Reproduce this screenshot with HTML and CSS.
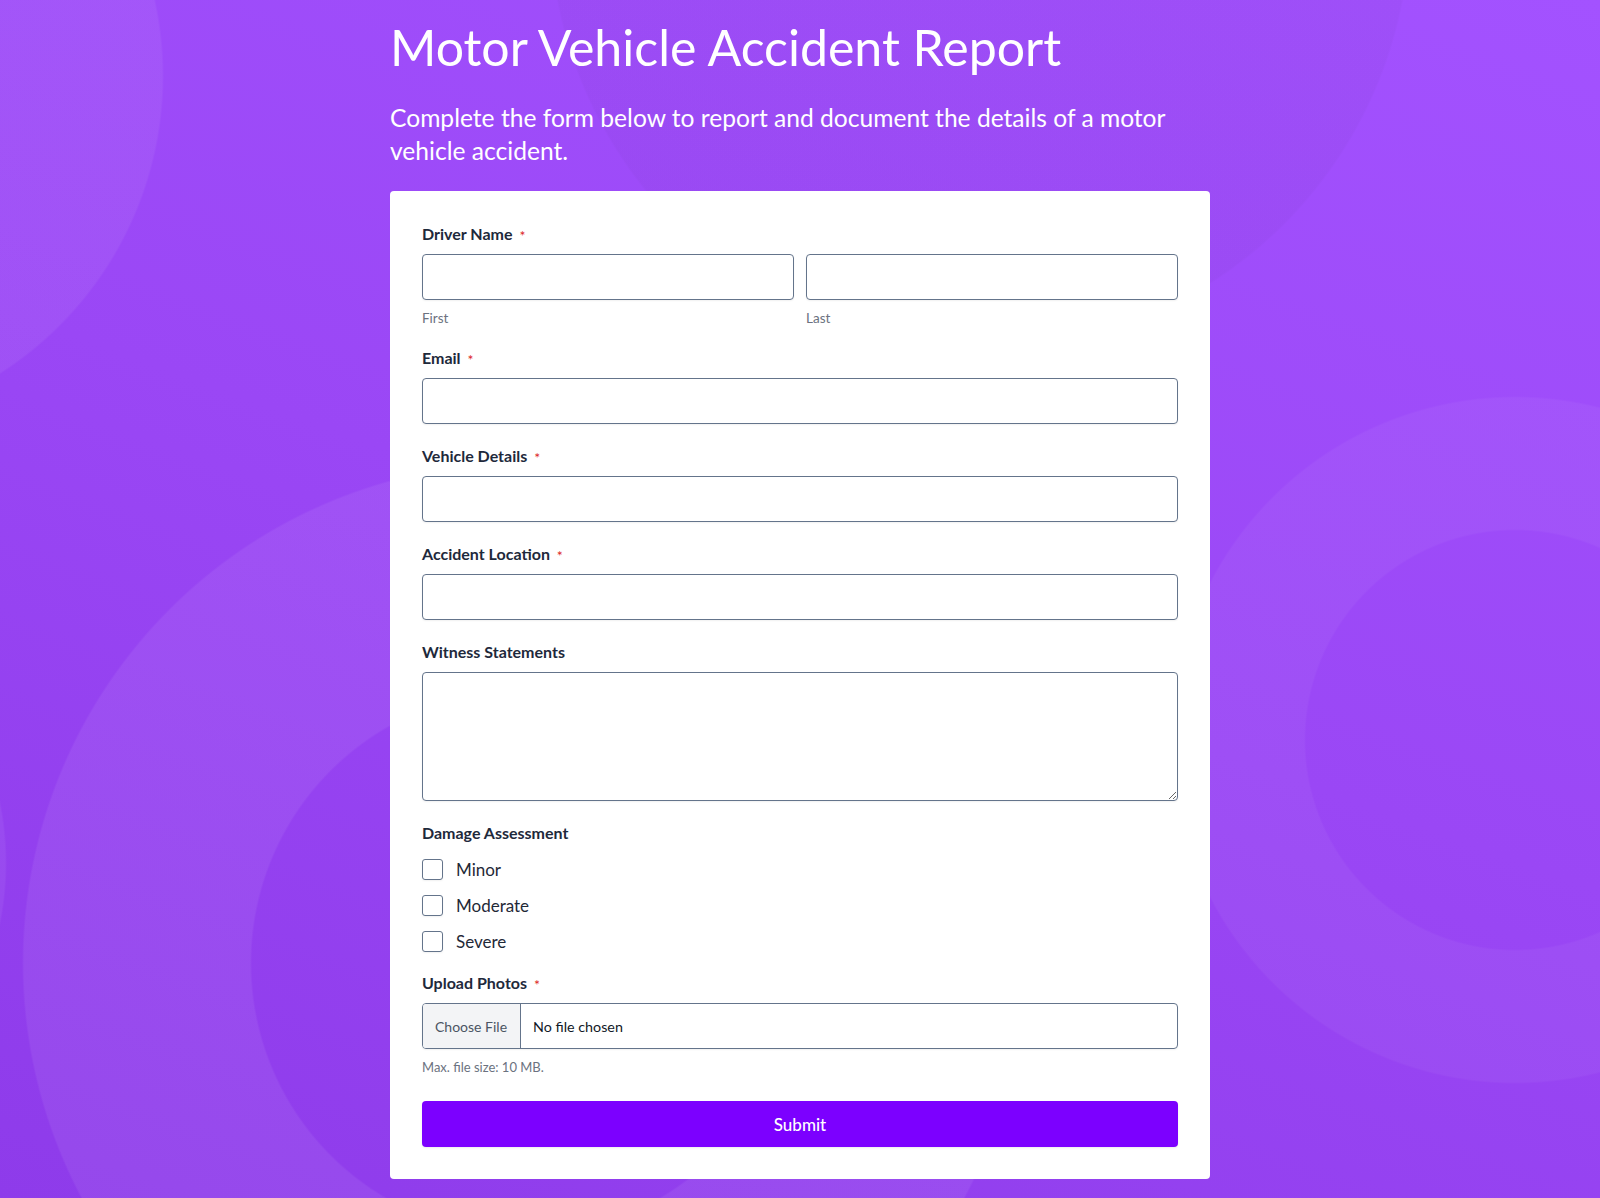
FILE: index.html
```html
<!DOCTYPE html>
<html lang="en">
<head>
<meta charset="utf-8">
<title>Motor Vehicle Accident Report</title>
<link rel="stylesheet" href="styles.css">
</head>
<body>
<div class="page">
  <main class="wrap">
    <h1 class="title">Motor Vehicle Accident Report</h1>
    <p class="intro">Complete the form below to report and document the details of a motor vehicle accident.</p>
    <form class="card">
      <div class="field">
        <div class="label">Driver Name <span class="req">*</span></div>
        <div class="name-row">
          <div class="name-col">
            <input class="input" type="text">
            <span class="sublabel">First</span>
          </div>
          <div class="name-col">
            <input class="input" type="text">
            <span class="sublabel">Last</span>
          </div>
        </div>
      </div>
      <div class="field">
        <div class="label">Email <span class="req">*</span></div>
        <input class="input" type="email">
      </div>
      <div class="field">
        <div class="label">Vehicle Details <span class="req">*</span></div>
        <input class="input" type="text">
      </div>
      <div class="field">
        <div class="label">Accident Location <span class="req">*</span></div>
        <input class="input" type="text">
      </div>
      <div class="field">
        <div class="label">Witness Statements</div>
        <textarea class="textarea"></textarea>
      </div>
      <div class="field field-checks">
        <div class="label">Damage Assessment</div>
        <div class="checks">
          <label class="check"><input type="checkbox" class="box"><span>Minor</span></label>
          <label class="check"><input type="checkbox" class="box"><span>Moderate</span></label>
          <label class="check"><input type="checkbox" class="box"><span>Severe</span></label>
        </div>
      </div>
      <div class="field field-upload">
        <div class="label">Upload Photos <span class="req">*</span></div>
        <label class="file">
          <input type="file" class="file-native">
          <span class="file-btn">Choose File</span>
          <span class="file-name">No file chosen</span>
        </label>
        <div class="hint">Max. file size: 10 MB.</div>
      </div>
      <button type="button" class="submit">Submit</button>
    </form>
  </main>
</div>
</body>
</html>
```
FILE: styles.css
```css
* { box-sizing: border-box; }
html, body { margin: 0; padding: 0; }
body {
  font-family: Lato, "Noto Sans", "Liberation Sans", sans-serif;
  color: #1e293b;
}
.page {
  min-height: 1198px;
  padding: 17px 0 16px;
  background-color: #9a47f4;
  background-image:
    radial-gradient(circle 354px at -190px 76px, rgba(255,255,255,0.06) 352px, rgba(255,255,255,0) 354px),
    radial-gradient(circle 307px at -300px 863px, rgba(255,255,255,0.06) 305px, rgba(255,255,255,0) 307px),
    radial-gradient(circle 502px at 523px 963px, rgba(255,255,255,0) 271px, rgba(255,255,255,0.065) 273px, rgba(255,255,255,0.065) 499px, rgba(255,255,255,0) 501px),
    radial-gradient(circle 345px at 1515px 740px, rgba(255,255,255,0) 209px, rgba(255,255,255,0.045) 211px, rgba(255,255,255,0.045) 342px, rgba(255,255,255,0) 344px),
    radial-gradient(circle 432px at 980px -80px, rgba(0,0,0,0.025) 429px, rgba(0,0,0,0) 431px),
    linear-gradient(200deg, #a352ff 0%, #9a47f5 50%, #8e3bea 100%);
}
.wrap {
  width: 820px;
  margin: 0 auto;
}
.title {
  margin: 0;
  font-size: 50px;
  line-height: 60px;
  font-weight: 400;
  color: #ffffff;
}
.intro {
  margin: 23.5px 0 0;
  font-size: 24.6px;
  line-height: 33px;
  font-weight: 400;
  color: #ffffff;
}
.card {
  margin-top: 24.5px;
  background: #ffffff;
  border-radius: 4px;
  padding: 33px 32px 32px;
  display: flex;
  flex-direction: column;
}
.field {
  display: flex;
  flex-direction: column;
  margin-bottom: 22px;
}
.label {
  font-size: 16px;
  line-height: 20px;
  font-weight: 700;
  color: #1e293b;
  margin-bottom: 10px;
}
.req {
  color: #dc2626;
  font-size: 14px;
  line-height: 1;
  font-weight: 400;
  margin-left: 3px;
  vertical-align: top;
  position: relative;
  top: 5px;
}
.name-row {
  display: grid;
  grid-template-columns: 1fr 1fr;
  column-gap: 12px;
}
.name-col {
  display: flex;
  flex-direction: column;
}
.sublabel {
  margin-top: 10px;
  font-size: 13.5px;
  line-height: 16px;
  color: #6b7280;
}
.input, .textarea {
  display: block;
  width: 100%;
  height: 46px;
  border: 1px solid #64748b;
  border-radius: 4px;
  background: #ffffff;
  box-shadow: 0 1px 2px rgba(0,0,0,0.06);
  font-family: inherit;
  font-size: 16px;
  padding: 8px 12px;
  outline: none;
}
.textarea {
  height: 129px;
  resize: vertical;
}
.field-checks { margin-bottom: 16px; }
.checks {
  display: flex;
  flex-direction: column;
  gap: 4px;
}
.check {
  display: flex;
  align-items: center;
  height: 32px;
  font-size: 17px;
  color: #1f2937;
}
.box {
  appearance: none;
  -webkit-appearance: none;
  margin: 0 13px 0 0;
  width: 21px;
  height: 21px;
  border: 1px solid #64748b;
  border-radius: 3px;
  background: #ffffff;
  box-shadow: 0 1px 2px rgba(0,0,0,0.06);
}
.field-upload { margin-bottom: 26px; }
.file {
  display: flex;
  align-items: stretch;
  height: 46px;
  border: 1px solid #64748b;
  border-radius: 4px;
  overflow: hidden;
  box-shadow: 0 1px 2px rgba(0,0,0,0.06);
}
.file-native { display: none; }
.file-btn {
  display: flex;
  align-items: center;
  padding: 0 12px;
  width: 98px;
  background: #f3f4f6;
  border-right: 1px solid #64748b;
  font-size: 14px;
  color: #4b5563;
}
.file-name {
  display: flex;
  align-items: center;
  padding-left: 12px;
  font-size: 14.3px;
  color: #111827;
}
.hint {
  margin-top: 10px;
  font-size: 13px;
  line-height: 16px;
  color: #6b7280;
}
.submit {
  height: 46px;
  border: none;
  border-radius: 4px;
  background: #7c00ff;
  color: #ffffff;
  font-family: inherit;
  font-size: 17px;
  font-weight: 500;
  box-shadow: 0 1px 2px rgba(0,0,0,0.08);
}
```
